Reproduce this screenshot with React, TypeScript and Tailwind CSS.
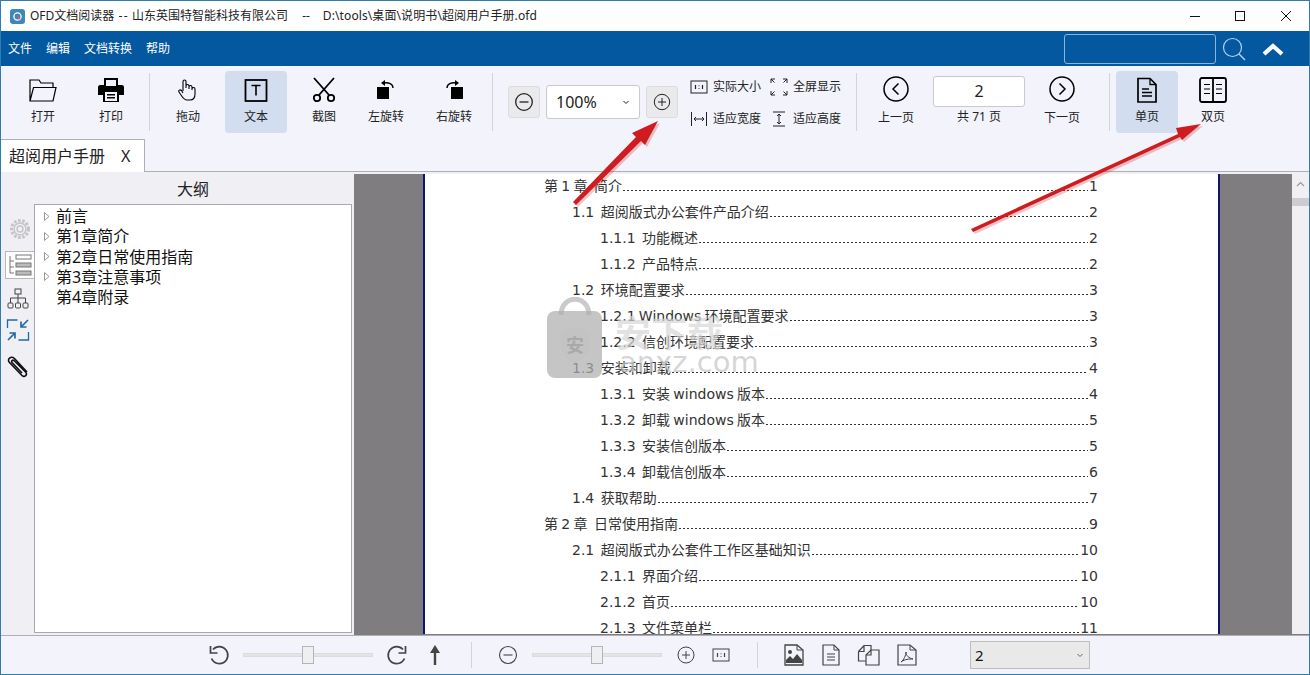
import React from "react";

const FONT = "font-['Noto_Sans','Noto_Sans_CJK_SC',sans-serif]";

type Toc = [number, string, string];
const toc: Toc[] = [
  [0, "第 1 章  简介", "1"],
  [1, "1.1  超阅版式办公套件产品介绍", "2"],
  [2, "1.1.1  功能概述", "2"],
  [2, "1.1.2  产品特点", "2"],
  [1, "1.2  环境配置要求", "3"],
  [2, "1.2.1 Windows 环境配置要求", "3"],
  [2, "1.2.2  信创环境配置要求", "3"],
  [1, "1.3  安装和卸载", "4"],
  [2, "1.3.1  安装 windows 版本", "4"],
  [2, "1.3.2  卸载 windows 版本", "5"],
  [2, "1.3.3  安装信创版本", "5"],
  [2, "1.3.4  卸载信创版本", "6"],
  [1, "1.4  获取帮助", "7"],
  [0, "第 2 章  日常使用指南", "9"],
  [1, "2.1  超阅版式办公套件工作区基础知识", "10"],
  [2, "2.1.1  界面介绍", "10"],
  [2, "2.1.2  首页", "10"],
  [2, "2.1.3  文件菜单栏", "11"],
];

function Svg({ s = 32, vb = 32, children, className = "" }: { s?: number; vb?: number; children: React.ReactNode; className?: string }) {
  return (
    <svg width={s} height={s} viewBox={`0 0 ${vb} ${vb}`} fill="none" stroke="currentColor" className={className}>
      {children}
    </svg>
  );
}

function ToolBtn({ label, active, icon, cls = "" }: { label: string; active?: boolean; icon: React.ReactNode; cls?: string }) {
  return (
    <div className={`w-[62px] h-[62px] shrink-0 flex flex-col items-center rounded-sm ${active ? "bg-[#d2deef]" : ""} ${cls}`}>
      <div className="h-[36px] mt-[1px] flex items-center justify-center text-black">{icon}</div>
      <div className="text-[12px] leading-[16px] mt-[1px] text-[#222]">{label}</div>
    </div>
  );
}

const Sep = ({ cls = "" }: { cls?: string }) => <div className={`w-px h-[58px] bg-[#d3d4da] shrink-0 ${cls}`} />;

function Slider({ cls = "", thumb }: { cls?: string; thumb: string }) {
  return (
    <div className={`relative w-[130px] h-[4px] bg-[#e4e4e4] border border-[#dcdcdc] shrink-0 ${cls}`}>
      <div className={`absolute -top-[8px] w-[12px] h-[18px] bg-[#efeff1] border border-[#b4b4b8] ${thumb}`} />
    </div>
  );
}

function Mini({ icon, label, cls = "" }: { icon: React.ReactNode; label: string; cls?: string }) {
  return (
    <div className={`flex items-center h-[20px] ${cls}`}>
      <div className="w-[18px] h-[18px] flex items-center justify-center text-[#222]">{icon}</div>
      <span className="ml-[5px] text-[12px] text-[#222] whitespace-nowrap">{label}</span>
    </div>
  );
}

export default function App() {
  return (
    <div className={`relative w-[1310px] h-[675px] overflow-hidden bg-[#f2f3fb] border border-[#2f7db0] flex flex-col ${FONT}`}>
      {/* title bar */}
      <div className="h-[30px] bg-white flex items-center shrink-0 text-[12px] text-[#222]">
        <svg width="15" height="15" viewBox="0 0 15 15" className="ml-[9px]">
          <rect width="15" height="15" rx="3" fill="#3d87bd" />
          <circle cx="7.5" cy="7.5" r="3.6" fill="none" stroke="#fff" strokeWidth="1.3" />
          <circle cx="9" cy="9" r="1.4" fill="#e0574f" />
        </svg>
        <span className="ml-[5px] whitespace-nowrap">OFD文档阅读器</span>
        <span className="ml-[4px] tracking-[1.5px] whitespace-nowrap">--</span>
        <span className="ml-[3px] whitespace-nowrap">山东英围特智能科技有限公司</span>
        <span className="ml-[14px] whitespace-nowrap">--</span>
        <span className="ml-[13px] tracking-[0.1px] whitespace-nowrap">D:\tools\桌面\说明书\超阅用户手册.ofd</span>
        <div className="ml-auto flex items-center text-[#111]">
          <Svg s={12} vb={12}><path d="M1 6.5h10" strokeWidth="1" /></Svg>
          <Svg s={12} vb={12} className="ml-[33px]"><rect x="1.5" y="1.5" width="9" height="9" strokeWidth="1" /></Svg>
          <Svg s={12} vb={12} className="ml-[34px] mr-[17px]"><path d="M1 1l10 10M11 1L1 11" strokeWidth="1" /></Svg>
        </div>
      </div>

      {/* menu bar */}
      <div className="h-[35px] bg-[#03589f] flex items-center shrink-0 text-white text-[12px]">
        <span className="ml-[7px]">文件</span>
        <span className="ml-[14px]">编辑</span>
        <span className="ml-[14px]">文档转换</span>
        <span className="ml-[14px]">帮助</span>
        <div className="ml-auto w-[152px] h-[30px] border border-[#8db4d6] rounded-[3px]" />
        <Svg s={26} vb={26} className="ml-[5px] text-[#b9d3e8]">
          <circle cx="11.5" cy="11.5" r="9" strokeWidth="1.2" />
          <path d="M18 18l6 6" strokeWidth="1.4" />
        </Svg>
        <Svg s={24} vb={24} className="ml-[14px] mr-[24px] text-white">
          <path d="M3 17l9-8 9 8" strokeWidth="4.2" />
        </Svg>
      </div>

      {/* toolbar */}
      <div className="h-[72px] flex items-center shrink-0">
        <ToolBtn cls="ml-[11px]" label="打开" icon={
          <Svg s={30} vb={30}><path d="M2 26V5h9l2 3h12v4M2 26l3.5-13.5H28L25 26z" strokeWidth="1.2" /></Svg>} />
        <ToolBtn cls="ml-[6px]" label="打印" icon={
          <svg width="26" height="26" viewBox="0 0 26 26" fill="currentColor">
            <path fillRule="evenodd" d="M6 1h14v7h4c1 0 2 1 2 2v8h-5v7H5v-7H0v-8c0-1 1-2 2-2h4zM8 3v6h10V3zM7 15v9h12v-9zM9 17h8v1.5H9zm0 3h8v1.5H9z" />
          </svg>} />
        <Sep cls="ml-[7px]" />
        <ToolBtn cls="ml-[7px]" label="拖动" icon={
          <Svg s={24} vb={24}><path d="M7 13V3.5a1.5 1.5 0 013 0V10m0-2a1.5 1.5 0 013 0v3m0-2a1.5 1.5 0 013 0v3m0-1a1.5 1.5 0 013 0v5c0 4-2 6-5 6h-3c-3 0-4-2-6-5l-2-3c-1-1.5 1-3 2.5-1.5L7 15" strokeWidth="1.1" /></Svg>} />
        <ToolBtn cls="ml-[6px]" active label="文本" icon={
          <Svg s={24} vb={24}><rect x="1.5" y="2" width="21" height="21" strokeWidth="1.8" /><path d="M7.5 7.5h9M12 7.5v10" strokeWidth="1.6" /></Svg>} />
        <ToolBtn cls="ml-[6px]" label="截图" icon={
          <Svg s={26} vb={26}><path d="M3 1l15 17M23 1L8 18" strokeWidth="1.8" /><circle cx="6" cy="21" r="3.2" strokeWidth="1.8" /><circle cx="20" cy="21" r="3.2" strokeWidth="1.8" /></Svg>} />
        <ToolBtn label="左旋转" icon={
          <Svg s={22} vb={22}><rect x="2" y="8" width="12" height="12" fill="currentColor" stroke="none" /><path d="M8 4c6-1 10 1 10 5" strokeWidth="1.4" /><path d="M10 1L6 4l4 3z" fill="currentColor" stroke="none" /></Svg>} />
        <ToolBtn cls="ml-[6px]" label="右旋转" icon={
          <Svg s={22} vb={22}><rect x="8" y="8" width="12" height="12" fill="currentColor" stroke="none" /><path d="M14 4C8 3 4 5 4 9" strokeWidth="1.4" /><path d="M12 1l4 3-4 3z" fill="currentColor" stroke="none" /></Svg>} />
        <Sep cls="ml-[7px]" />
        <div className="ml-[15px] w-[32px] h-[32px] rounded-[3px] bg-[#eaeaec] border border-[#dcdce0] flex items-center justify-center text-[#222]">
          <Svg s={20} vb={20}><circle cx="10" cy="10" r="8.3" strokeWidth="1.3" /><path d="M5.5 10h9" strokeWidth="1.3" /></Svg>
        </div>
        <div className="ml-[6px] w-[94px] h-[34px] rounded-[3px] bg-white border border-[#c9c9cf] flex items-center text-[#222]">
          <span className="ml-[9px] text-[16px]">100%</span>
          <Svg s={8} vb={8} className="ml-auto mr-[9px]"><path d="M1.5 3L4 5.5 6.5 3" strokeWidth="1" /></Svg>
        </div>
        <div className="ml-[6px] w-[32px] h-[32px] rounded-[3px] bg-[#eaeaec] border border-[#dcdce0] flex items-center justify-center text-[#222]">
          <Svg s={18} vb={18}><circle cx="9" cy="9" r="7.7" strokeWidth="1" /><path d="M5 9h8M9 5v8" strokeWidth="1" /></Svg>
        </div>
        <div className="ml-[12px] grid grid-cols-[80px_80px] gap-y-[12px] mt-[2px]">
          <Mini label="实际大小" icon={<Svg s={18} vb={18}><rect x="1" y="3" width="16" height="12" strokeWidth="1" /><path d="M5.5 7v4M12.5 7v4M9 7.5v.8M9 10v.8" strokeWidth="1.2" /></Svg>} />
          <Mini label="全屏显示" icon={<Svg s={18} vb={18}><path d="M1 5V1h4M1 1l3.5 3.5M13 1h4v4M17 1l-3.5 3.5M1 13v4h4M1 17l3.5-3.5M17 13v4h-4M17 17l-3.5-3.5" strokeWidth="1" /></Svg>} />
          <Mini label="适应宽度" icon={<Svg s={18} vb={18}><path d="M1.5 2v14M16.5 2v14M4 9h10M4 9l2-2M4 9l2 2M14 9l-2-2M14 9l-2 2" strokeWidth="1" /></Svg>} />
          <Mini label="适应高度" icon={<Svg s={18} vb={18}><path d="M3 2h12M3 16h12M9 4v10M9 4L7 6M9 4l2 2M9 14l-2-2M9 14l2-2" strokeWidth="1" /></Svg>} />
        </div>
        <Sep cls="ml-[6px]" />
        <div className="ml-[8px] w-[62px] h-[62px] flex flex-col items-center">
          <Svg s={26} vb={26} className="mt-[5px] text-black"><circle cx="13" cy="13" r="12" strokeWidth="1.5" /><path d="M15.5 7.5L10 13l5.5 5.5" strokeWidth="1.5" /></Svg>
          <span className="text-[12px] mt-[7px] text-[#222]">上一页</span>
        </div>
        <div className="ml-[6px] w-[92px] flex flex-col items-center -mt-[3px]">
          <div className="w-[92px] h-[31px] rounded-[3px] bg-white border border-[#c9c9cf] flex items-center justify-center text-[16px] text-[#222]">2</div>
          <span className="text-[12px] mt-[1px] text-[#222]">共 71 页</span>
        </div>
        <div className="ml-[6px] w-[62px] h-[62px] flex flex-col items-center">
          <Svg s={26} vb={26} className="mt-[5px] text-black"><circle cx="13" cy="13" r="12" strokeWidth="1.5" /><path d="M10.5 7.5L16 13l-5.5 5.5" strokeWidth="1.5" /></Svg>
          <span className="text-[12px] mt-[7px] text-[#222]">下一页</span>
        </div>
        <Sep cls="ml-[16px]" />
        <ToolBtn cls="ml-[6px]" active label="单页" icon={
          <Svg s={26} vb={26}><path d="M4 1.5h12l6 6V25H4z" strokeWidth="1.7" /><path d="M16 1.5v6h6" strokeWidth="1.3" /><path d="M8 12h7M8 15.5h10M8 19h10" strokeWidth="1.4" /></Svg>} />
        <ToolBtn cls="ml-[4px]" label="双页" icon={
          <Svg s={28} vb={28}><rect x="1" y="2" width="26" height="24" rx="2" strokeWidth="1.8" /><path d="M14 2v24" strokeWidth="1.8" /><path d="M5 8.5h6M5 13h6M5 17.5h6M17 8.5h6M17 13h6M17 17.5h6" strokeWidth="1.1" /></Svg>} />
      </div>

      {/* tab row */}
      <div className="h-[34px] shrink-0 flex border-b border-[#aeaeb4] items-end">
        <div className="w-[144px] h-[33px] -mb-px bg-white border-t border-r border-[#aeaeb4] flex items-center text-[16px] text-[#222]">
          <span className="ml-[8px]">超阅用户手册</span>
          <span className="ml-[16px]">X</span>
        </div>
      </div>

      {/* body */}
      <div className="flex-1 min-h-0 flex">
        {/* sidebar */}
        <div className="w-[353px] shrink-0 bg-[#f0eff4] flex flex-col">
          <div className="h-[32px] pt-[2px] flex items-center justify-center text-[16px] text-[#222] pl-[31px]">大纲</div>
          <div className="flex-1 min-h-0 flex">
            <div className="w-[33px] shrink-0 flex flex-col items-end">
              <Svg s={22} vb={22} className="mt-[14px] mr-[3px] text-[#c4c4c7]">
                <circle cx="11" cy="11" r="3" strokeWidth="1.4" />
                <circle cx="11" cy="11" r="6" strokeWidth="1.4" />
                <circle cx="11" cy="11" r="8.5" strokeWidth="3" strokeDasharray="2.6 1.6" />
              </Svg>
              <div className="mt-[11px] w-[29px] h-[28px] bg-white border border-r-0 border-[#b8b8bc] flex items-center justify-center text-[#777]">
                <Svg s={24} vb={24}>
                  <path d="M2 3v17M2 8h4M2 14h4M2 20h4" strokeWidth="1" />
                  <rect x="8" y="2" width="15" height="4" strokeWidth="1" />
                  <rect x="8" y="10" width="15" height="4" fill="#bbb" strokeWidth="1" />
                  <rect x="8" y="18" width="15" height="4" fill="#bbb" strokeWidth="1" />
                </Svg>
              </div>
              <Svg s={22} vb={22} className="mt-[9px] mr-[5px] text-[#444]">
                <rect x="8" y="1" width="6" height="5" strokeWidth="1" />
                <path d="M11 6v4M3.5 15v-5h15v5M11 10v5" strokeWidth="1" />
                <rect x="1" y="15" width="5" height="5" rx="1" strokeWidth="1" />
                <rect x="8.5" y="15" width="5" height="5" rx="1" strokeWidth="1" />
                <rect x="16" y="15" width="5" height="5" rx="1" strokeWidth="1" />
              </Svg>
              <Svg s={24} vb={24} className="mt-[8px] mr-[4px] text-[#1f6aa8]">
                <path d="M1.5 10V2h10M22.5 14v8h-10" strokeWidth="1.3" />
                <path d="M22 2l-7 7M15 3.5V9h5.5M2 22l7-7M3.5 15H9v5.5" strokeWidth="1.7" />
              </Svg>
              <Svg s={24} vb={24} className="mt-[12px] mr-[4px] text-[#111]">
                <path d="M21 18L8.5 4.5C5 1.500 .5 5 3.500 8.500L16 21.500c2.500 2.500 6-1 3.500-3.500L8 6.500c-1.500-1-3 .5-2 2l10 10.500" strokeWidth="1.6" />
              </Svg>
            </div>
            <div className="w-[318px] h-[429px] bg-white border border-[#a8a8ae] pl-[4px] pt-[1px]">
              {[
                ["前言", true],
                ["第1章简介", true],
                ["第2章日常使用指南", true],
                ["第3章注意事项", true],
                ["第4章附录", false],
              ].map(([t, arrow]) => (
                <div key={t as string} className="h-[20.25px] flex items-center text-[16px] text-[#111]">
                  <span className="w-[17px] flex justify-start pl-[5px]">
                    {arrow ? (
                      <svg width="6" height="9" viewBox="0 0 6 9">
                        <path d="M.5.5L5 4.5.5 8.5z" fill="#fff" stroke="#999" />
                      </svg>
                    ) : null}
                  </span>
                  {t as string}
                </div>
              ))}
            </div>
          </div>
        </div>

        {/* document view */}
        <div className="flex-1 min-w-0 bg-[#7f7d80] border-t-2 border-[#f0eff4] flex pl-[69px] pr-[17px] relative">
          <div className="w-[797px] h-[460px] bg-white border-x-2 border-x-[#14146e] pl-[119px] pr-[120px] overflow-hidden font-['DejaVu_Sans','Noto_Sans_CJK_SC',sans-serif] text-[14px] [word-spacing:-1.2px] text-[#333]">
            <div className="-mt-[1px]">
              {toc.map(([lv, t, n], i) => (
                <div key={i} className={`h-[26px] flex items-center ${lv === 1 ? "pl-[28px]" : lv === 2 ? "pl-[56px]" : ""}`}>
                  <span className="whitespace-pre shrink-0">{t}</span>
                  <span className="flex-1 min-w-0 self-end mb-[7px] h-[3px] bg-[radial-gradient(circle,#333_0.8px,transparent_1px)] bg-[length:4px_3px] bg-repeat-x" />
                  <span className="shrink-0 ml-[1px]">{n}</span>
                </div>
              ))}
            </div>
          </div>
          {/* scrollbar */}
          <div className="absolute right-0 top-0 w-[17px] h-[460px] bg-[#f0eff4] flex flex-col items-center">
            <svg width="9" height="6" viewBox="0 0 9 6" className="mt-[7px] text-[#999]" fill="none" stroke="currentColor"><path d="M1 5l3.5-3.5L8 5" strokeWidth="1.2" /></svg>
            <div className="mt-[11px] w-[17px] h-[8px] bg-[#cdcdcf]" />
          </div>
        </div>
      </div>

      {/* status bar */}
      <div className="h-[39px] shrink-0 border-t border-[#aeaeb4] bg-[#f2f3fb] flex items-center text-[#444]">
        <Svg s={24} vb={24} className="ml-[206px]"><path d="M6 6.5a8.5 8.5 0 11-1.5 9" strokeWidth="1.7" /><path d="M3.5 3v7h7" strokeWidth="1.7" /></Svg>
        <Slider cls="ml-[12px]" thumb="left-[58px]" />
        <Svg s={24} vb={24} className="ml-[12px]"><path d="M18 6.5a8.5 8.5 0 101.5 9" strokeWidth="1.7" /><path d="M20.5 3v7h-7" strokeWidth="1.7" /></Svg>
        <Svg s={24} vb={24} className="ml-[14px]"><path d="M12 5v17" strokeWidth="2.4" /><path d="M7 10l5-8 5 8z" fill="currentColor" stroke="none" /></Svg>
        <div className="ml-[24px] w-px h-[26px] bg-[#d3d4da]" />
        <Svg s={24} vb={24} className="ml-[24px]"><circle cx="12" cy="12" r="8.5" strokeWidth="1.1" /><path d="M7.5 12h9" strokeWidth="1.1" /></Svg>
        <Slider cls="ml-[12px]" thumb="left-[58px]" />
        <Svg s={24} vb={24} className="ml-[12px]"><circle cx="12" cy="12" r="8" strokeWidth="1" /><path d="M8 12h8M12 8v8" strokeWidth="1" /></Svg>
        <Svg s={24} vb={24} className="ml-[11px]"><rect x="4" y="6" width="16" height="12" strokeWidth="1" /><path d="M8.5 10v4M15.5 10v4M12 10.5v.8M12 13v.8" strokeWidth="1.2" /></Svg>
        <div className="ml-[24px] w-px h-[26px] bg-[#d3d4da]" />
        <Svg s={24} vb={24} className="ml-[24px]"><path d="M3 2h12l6 5v15H3z" strokeWidth="1.3" /><path d="M15 2v5h6" strokeWidth="1" /><circle cx="8" cy="9" r="2" fill="currentColor" stroke="none" /><path d="M4 20v-3l4-4 3 3 4-5 5 6v3z" fill="currentColor" stroke="none" /></Svg>
        <Svg s={24} vb={24} className="ml-[13px]"><path d="M4 2h11l5 5v15H4z" strokeWidth="1.2" /><path d="M15 2v5h5" strokeWidth="1" /><path d="M8 11h8M8 14h8M8 17h8" strokeWidth="1.1" /></Svg>
        <Svg s={24} vb={24} className="ml-[14px]"><path d="M1.5 8.500L7 2.500h7v5M1.500 8.500V18h7M1.500 8.500H7v-6" strokeWidth="1.2" /><path d="M9 12l5-5h8v15H9z" fill="#f2f3fb" strokeWidth="1.2" /><path d="M14 7v5H9" strokeWidth="1.2" /></Svg>
        <Svg s={24} vb={24} className="ml-[14px]"><path d="M3 2h12l6 5v15H3z" strokeWidth="1.2" /><path d="M15 2v5h6" strokeWidth="1" /><path d="M6 19c3-2 5-7 5-10 0 4 3 6 7 7-4 0-8 0-12 3z" strokeWidth="1" /></Svg>
        <div className="ml-[51px] w-[120px] h-[28px] bg-[#e9e9ea] border border-[#bdbdc0] flex items-center text-[#111]">
          <span className="ml-[4px] text-[15px]">2</span>
          <svg width="8" height="8" viewBox="0 0 8 8" fill="none" stroke="#666" className="ml-auto mr-[5px]"><path d="M1.5 3L4 5.5 6.5 3" /></svg>
        </div>
      </div>

      {/* watermark overlay */}
      <div className="absolute left-[546px] top-[296px] w-[220px] h-[84px] pointer-events-none">
        <svg width="56" height="82" viewBox="0 0 56 82" className="absolute left-0 top-0">
          <path d="M14 18C14 -3 42 -3 42 18" fill="none" stroke="#bdbdbd" strokeWidth="5" opacity="0.8" />
          <rect x="0" y="14" width="55" height="67" rx="8" fill="#aeaeae" opacity="0.72" />
          <path d="M28 30l14 4v14c0 10-7 15-14 18-7-3-14-8-14-18V34z" fill="#c2c2c2" opacity="0.9" />
        </svg>
        <span className="absolute left-[19px] top-[34px] text-[18px] font-bold text-[#a9a9a9] font-['Noto_Sans_CJK_SC',sans-serif]">安</span>
        <span className="absolute left-[68px] top-[12px] text-[36px] leading-[44px] font-bold text-[#d6d6d6]/70 font-['Noto_Sans_CJK_SC',sans-serif] whitespace-nowrap">安下载</span>
        <span className="absolute left-[72px] top-[47px] text-[29px] leading-[36px] text-[#c8c8c8]/75 font-['DejaVu_Sans',sans-serif]">anxz.com</span>
      </div>

      {/* red annotation arrows */}
      <svg width="1310" height="675" viewBox="0 0 1310 675" className="absolute left-[-1px] top-[-1px] pointer-events-none">
        <polygon points="573,202 636,137 632,133 658,121 645,145 641,141 576,205" fill="#c8151b" opacity="0.25" transform="translate(2,2)" />
        <polygon points="573,202 636,137 632,133 658,121 645,145 641,141 576,205" fill="#cf1c20" />
        <polygon points="971,229 1178,134 1176,128 1201,124 1182,140 1180,137 973,232" fill="#c8151b" opacity="0.25" transform="translate(2,2)" />
        <polygon points="971,229 1178,134 1176,128 1201,124 1182,140 1180,137 973,232" fill="#cf1c20" />
      </svg>
    </div>
  );
}
